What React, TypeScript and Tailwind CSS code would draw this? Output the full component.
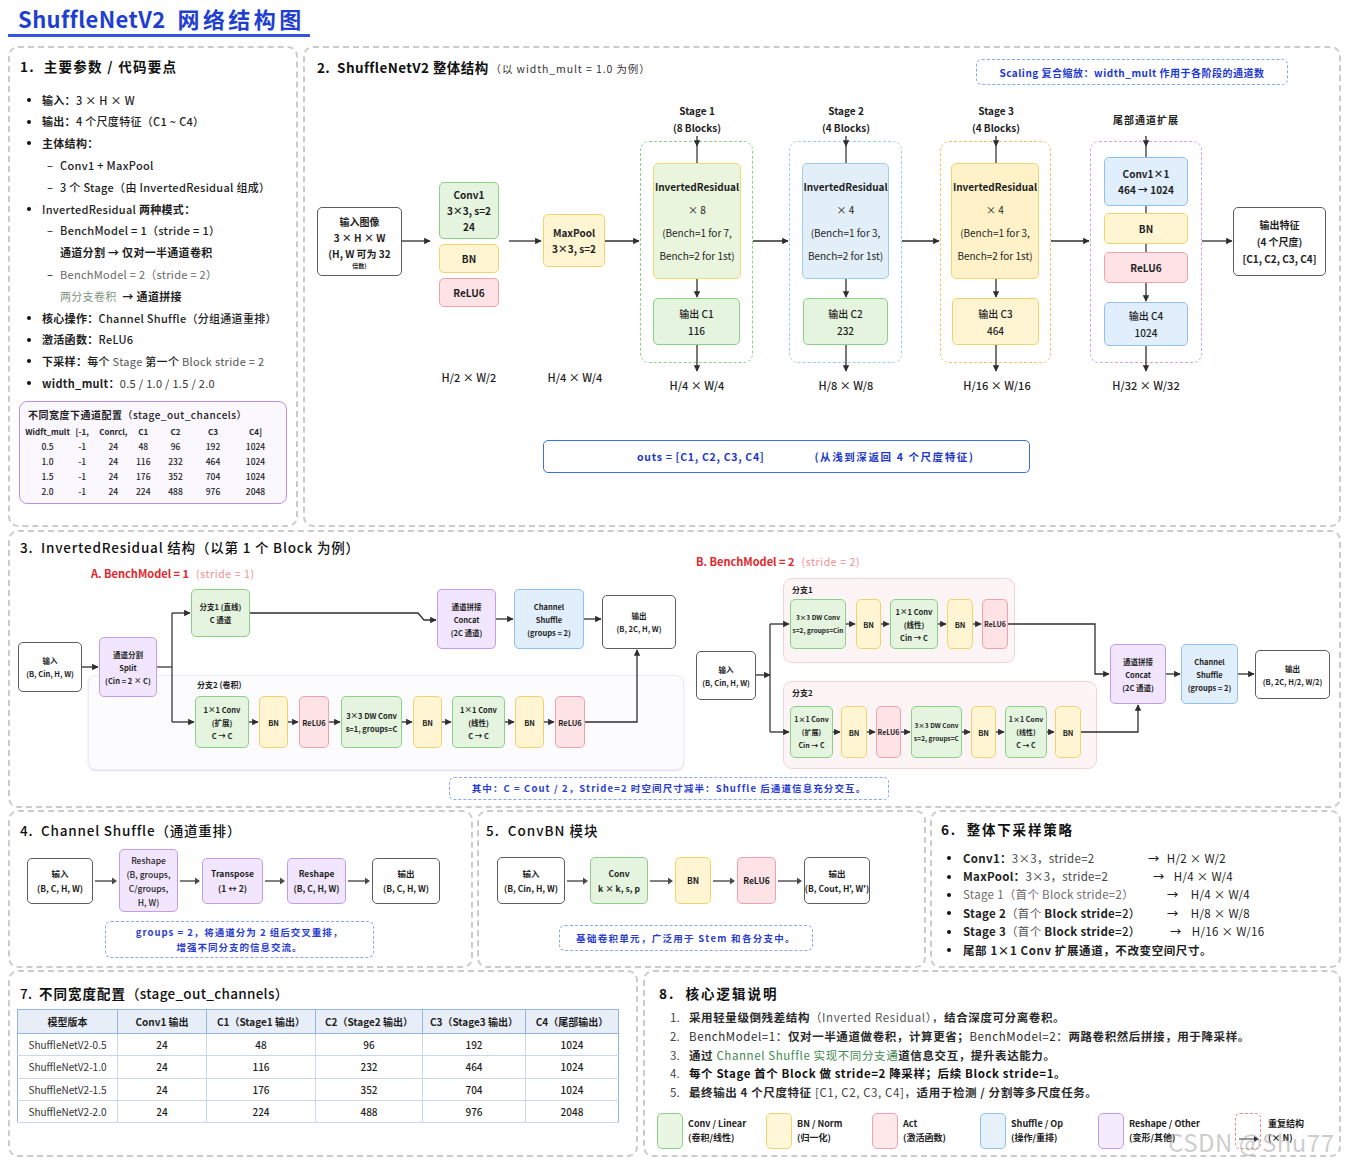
import React from "react";

type Tone = "green" | "yellow" | "pink" | "blue" | "purple" | "plain" | "ir1" | "ir2" | "ir3";

const TONE: Record<Tone, string> = {
  green: "border-[#8ccf87] bg-[#e4f4de]",
  yellow: "border-[#f1d36e] bg-[#fff5d2]",
  pink: "border-[#f0a1a9] bg-[#fde3e6]",
  blue: "border-[#92c0ef] bg-[#e1eefb]",
  purple: "border-[#c39bef] bg-[#f1e6fd]",
  plain: "border-[#5c5c5c] bg-white",
  ir1: "border-[#f1d970] bg-[#e9f5dc]",
  ir2: "border-[#9fcde8] bg-[#e2eff8]",
  ir3: "border-[#f3d470] bg-[#fff2c8]",
};

const PANEL = "relative rounded-[10px] border-2 border-dashed border-[#cbcbcb] bg-white";

type N = { x: number; y: number; w: number; h: number; t: Tone; l: React.ReactNode[]; c?: string };

function Nodes({ items, ox, oy, c }: { items: N[]; ox: number; oy: number; c: string }) {
  return (
    <>
      {items.map((n, i) => (
        <div
          key={i}
          className={`absolute flex flex-col items-center justify-center whitespace-nowrap rounded-[5px] border-[1.5px] text-center text-[#1e1e1e] ${TONE[n.t]} ${n.c ?? c}`}
          style={{ left: n.x - ox, top: n.y - oy, width: n.w, height: n.h }}
        >
          {n.l.map((s, j) => (
            <span key={j}>{s}</span>
          ))}
        </div>
      ))}
    </>
  );
}

function Wires({ id, ox, oy, w, h, paths, plain = [] }: { id: string; ox: number; oy: number; w: number; h: number; paths: string[]; plain?: string[] }) {
  return (
    <svg className="pointer-events-none absolute left-0 top-0" width={w} height={h} viewBox={`${ox} ${oy} ${w} ${h}`}>
      <defs>
        <marker id={id} viewBox="0 0 10 10" refX="9" refY="5" markerWidth="5" markerHeight="5" orient="auto-start-reverse">
          <path d="M0 0 L10 5 L0 10 z" fill="#2e2e2e" />
        </marker>
      </defs>
      {plain.map((d, i) => (
        <path key={"p" + i} d={d} fill="none" stroke="#3a3a3a" strokeWidth={1.3} />
      ))}
      {paths.map((d, i) => (
        <path key={i} d={d} fill="none" stroke="#2e2e2e" strokeWidth={1.3} markerEnd={`url(#${id})`} />
      ))}
    </svg>
  );
}

function Label({ x, y, ox, oy, children, className = "" }: { x: number; y: number; ox: number; oy: number; children: React.ReactNode; className?: string }) {
  return (
    <div className={`absolute -translate-x-1/2 -translate-y-1/2 whitespace-nowrap ${className}`} style={{ left: x - ox, top: y - oy }}>
      {children}
    </div>
  );
}

function HArrow({ w }: { w: number }) {
  return (
    <svg width={w} height={10} className="shrink-0">
      <line x1={2} y1={5} x2={w - 6} y2={5} stroke="#4a4a4a" strokeWidth={1.4} />
      <path d={`M${w - 7} 1.5 L${w - 2} 5 L${w - 7} 8.5 z`} fill="#4a4a4a" />
    </svg>
  );
}

/* ---------- section 1 ---------- */

function Bullet({ children }: { children: React.ReactNode }) {
  return (
    <div className="flex h-[21.8px] items-center whitespace-nowrap">
      <span className="w-[22px] pl-[7px]">
        <span className="block h-[4px] w-[4px] rounded-full bg-[#111]" />
      </span>
      <span>{children}</span>
    </div>
  );
}

function Dash({ children }: { children: React.ReactNode }) {
  return (
    <div className="flex h-[21.8px] items-center whitespace-nowrap">
      <span className="w-[40px] pl-[27px] text-[#333]">–</span>
      <span>{children}</span>
    </div>
  );
}

function Indent({ children }: { children: React.ReactNode }) {
  return <div className="flex h-[21.8px] items-center whitespace-nowrap pl-[40px]">{children}</div>;
}

const WIDTH_ROWS = [
  ["0.5", "-1", "24", "48", "96", "192", "1024"],
  ["1.0", "-1", "24", "116", "232", "464", "1024"],
  ["1.5", "-1", "24", "176", "352", "704", "1024"],
  ["2.0", "-1", "24", "224", "488", "976", "2048"],
];

function Params() {
  return (
    <div className={`${PANEL} w-[290px] px-[10px] pt-[8px]`}>
      <div className="h-[20px] whitespace-nowrap text-[13.5px] font-bold leading-[20px] tracking-[1.3px] text-[#111]">1.&nbsp; 主要参数 / 代码要点</div>
      <div className="mt-[13px] text-[11px] font-medium tracking-[0.3px] text-[#1e1e1e]">
        <Bullet>
          <b>输入：</b>3 × H × W
        </Bullet>
        <Bullet>
          <b>输出：</b>4 个尺度特征（C1 ~ C4）
        </Bullet>
        <Bullet>
          <b>主体结构：</b>
        </Bullet>
        <Dash>Conv1 + MaxPool</Dash>
        <Dash>3 个 Stage（由 InvertedResidual 组成）</Dash>
        <Bullet>
          InvertedResidual <b>两种模式：</b>
        </Bullet>
        <Dash>BenchModel = 1（stride = 1）</Dash>
        <Indent>
          <b>通道分割 → 仅对一半通道卷积</b>
        </Indent>
        <Dash>
          <span className="font-normal text-[#666]">BenchModel = 2（stride = 2）</span>
        </Dash>
        <Indent>
          <span className="font-normal text-[#7d927d]">两分支卷积</span>
          <b className="ml-[6px]">→ 通道拼接</b>
        </Indent>
        <Bullet>
          <b>核心操作：</b>Channel Shuffle（分组通道重排）
        </Bullet>
        <Bullet>
          <b>激活函数：</b>ReLU6
        </Bullet>
        <Bullet>
          <b>下采样：</b>每个 <span className="font-normal text-[#555]">Stage</span> 第一个 <span className="font-normal text-[#555]">Block stride = 2</span>
        </Bullet>
        <Bullet>
          <b>width_mult：</b>
          <span className="font-normal text-[#333]">0.5 / 1.0 / 1.5 / 2.0</span>
        </Bullet>
      </div>
      <div className="ml-[-1px] mt-[7px] h-[103px] w-[268px] rounded-[8px] border-[1.5px] border-[#bb8ff0] bg-[#fbf7ff] pt-[4px]">
        <div className="whitespace-nowrap pl-[8px] text-[10px] font-bold leading-[18px] tracking-[0.5px] text-[#222]">
          不同宽度下通道配置<span className="font-medium">（stage_out_chancels）</span>
        </div>
        <div className="grid grid-cols-[37px_32.5px_29.5px_30.5px_34px_41px_44px] pl-[9px] text-[8.5px] font-medium text-[#222]">
          {["Widft_mult", "[-1,", "Conrcl,", "C1", "C2", "C3", "C4]"].map((h) => (
            <div key={h} className="flex h-[15px] items-center justify-center whitespace-nowrap text-[8px] font-bold">
              {h}
            </div>
          ))}
          {WIDTH_ROWS.flat().map((v, i) => (
            <div key={i} className="flex h-[15px] items-center justify-center">
              {v}
            </div>
          ))}
        </div>
      </div>
    </div>
  );
}

/* ---------- section 2 ---------- */

const S2X = 305;
const S2Y = 48;

const S2_NODES: N[] = [
  {
    x: 317, y: 207, w: 85, h: 69, t: "plain", c: "text-[10px] font-bold leading-[16px]",
    l: ["输入图像", "3 × H × W", "(H, W 可为 32", <span className="block text-[6px] leading-[8px]">倍数)</span>],
  },
  { x: 439, y: 182, w: 60, h: 57, t: "green", l: ["Conv1", "3×3, s=2", "24"] },
  { x: 439, y: 244, w: 60, h: 29, t: "yellow", l: ["BN"] },
  { x: 439, y: 278, w: 60, h: 29, t: "pink", l: ["ReLU6"] },
  { x: 543, y: 214, w: 62, h: 53, t: "yellow", l: ["MaxPool", "3×3, s=2"] },
  { x: 653, y: 163, w: 88, h: 116, t: "ir1", c: "text-[10px] leading-[23px]", l: [<b>InvertedResidual</b>, "× 8", "(Bench=1 for 7,", "Bench=2 for 1st)"] },
  { x: 653, y: 298, w: 87, h: 47, t: "green", c: "text-[10px] font-medium leading-[17px]", l: ["输出 C1", "116"] },
  { x: 802, y: 163, w: 87, h: 116, t: "ir2", c: "text-[10px] leading-[23px]", l: [<b>InvertedResidual</b>, "× 4", "(Bench=1 for 3,", "Bench=2 for 1st)"] },
  { x: 803, y: 298, w: 85, h: 47, t: "green", c: "text-[10px] font-medium leading-[17px]", l: ["输出 C2", "232"] },
  { x: 951, y: 163, w: 88, h: 116, t: "ir3", c: "text-[10px] leading-[23px]", l: [<b>InvertedResidual</b>, "× 4", "(Bench=1 for 3,", "Bench=2 for 1st)"] },
  { x: 952, y: 298, w: 87, h: 47, t: "yellow", c: "text-[10px] font-medium leading-[17px]", l: ["输出 C3", "464"] },
  { x: 1104, y: 157, w: 84, h: 49, t: "blue", l: ["Conv1×1", "464 → 1024"] },
  { x: 1104, y: 213, w: 84, h: 31, t: "yellow", l: ["BN"] },
  { x: 1104, y: 252, w: 84, h: 31, t: "pink", l: ["ReLU6"] },
  { x: 1104, y: 302, w: 84, h: 44, t: "blue", c: "text-[10px] font-medium leading-[17px]", l: ["输出 C4", "1024"] },
  { x: 1233, y: 207, w: 93, h: 69, t: "plain", c: "text-[10px] font-bold leading-[17px]", l: ["输出特征", "(4 个尺度)", "[C1, C2, C3, C4]"] },
];

const STAGE_BOXES = [
  { x: 640, w: 113, c: "border-[#8fd08c]" },
  { x: 789, w: 113, c: "border-[#9cd3d8]" },
  { x: 940, w: 111, c: "border-[#f3c466]" },
  { x: 1090, w: 112, c: "border-[#c8a4f1]" },
];

function Overall() {
  const arrows = [
    "M402 241 H430", "M509 241 H541", "M605 241 H639", "M753 241 H788", "M902 241 H939", "M1051 241 H1089", "M1202 241 H1232",
    "M697 279 V297", "M846 279 V297", "M996 279 V297", "M1146 283 V301",
    "M697 345 V371", "M846 345 V371", "M996 345 V371", "M1146 346 V371",
    "M697 136 V146", "M846 136 V146", "M996 136 V146", "M1146 136 V146",
  ];
  const plain = ["M1146 206 V213", "M1146 244 V252", "M697 146 V163", "M846 146 V163", "M996 146 V163", "M1146 146 V157"];
  return (
    <div className={`${PANEL} flex-1 pl-[12px] pt-[9px]`}>
      <div className="flex h-[20px] items-baseline whitespace-nowrap leading-[20px] text-[#111]">
        <span className="text-[13.5px] font-bold tracking-[0.4px]">2.&nbsp; ShuffleNetV2 整体结构</span>
        <span className="ml-[2px] text-[10.5px] tracking-[0.9px] text-[#333]">（以 width_mult = 1.0 为例）</span>
      </div>
      <div
        className="absolute flex items-center justify-center whitespace-nowrap rounded-[6px] border-[1.5px] border-dashed border-[#80a8ef] text-[10px] font-bold tracking-[0.5px] text-[#1d38d4]"
        style={{ left: 976 - S2X, top: 59 - S2Y, width: 312, height: 26 }}
      >
        Scaling 复合缩放：width_mult 作用于各阶段的通道数
      </div>
      {STAGE_BOXES.map((s) => (
        <div
          key={s.x}
          className={`absolute rounded-[9px] border-[1.5px] border-dashed ${s.c}`}
          style={{ left: s.x - S2X, top: 141 - S2Y, width: s.w, height: 222 }}
        />
      ))}
      <Wires id="a2" ox={S2X} oy={S2Y} w={1034} h={477} paths={arrows} plain={plain} />
      <Nodes items={S2_NODES} ox={S2X} oy={S2Y} c="text-[10px] font-bold leading-[16px]" />
      {[
        [697, "Stage 1", "(8 Blocks)"],
        [846, "Stage 2", "(4 Blocks)"],
        [996, "Stage 3", "(4 Blocks)"],
      ].map(([x, a, b]) => (
        <Label key={a as string} x={x as number} y={119} ox={S2X} oy={S2Y} className="text-center text-[10px] font-bold leading-[17px] text-[#1e1e1e]">
          <div>{a}</div>
          <div>{b}</div>
        </Label>
      ))}
      <Label x={1146} y={119} ox={S2X} oy={S2Y} className="text-[10px] font-bold tracking-[1px] text-[#1e1e1e]">
        尾部通道扩展
      </Label>
      {[
        [469, 377, "H/2 × W/2"],
        [575, 377, "H/4 × W/4"],
        [697, 385, "H/4 × W/4"],
        [846, 385, "H/8 × W/8"],
        [997, 385, "H/16 × W/16"],
        [1146, 385, "H/32 × W/32"],
      ].map(([x, y, t], i) => (
        <Label key={i} x={x as number} y={y as number} ox={S2X} oy={S2Y} className="text-[11px] font-medium text-[#1e1e1e]">
          {t}
        </Label>
      ))}
      <div
        className="absolute flex items-center whitespace-nowrap rounded-[5px] border-[1.5px] border-[#3f6fe6] pl-[93px] text-[10.5px] font-bold text-[#2137c9]"
        style={{ left: 543 - S2X, top: 440 - S2Y, width: 487, height: 33 }}
      >
        <span className="tracking-[0.7px]">outs = [C1, C2, C3, C4]</span>
        <span className="ml-[50px] tracking-[1.6px]">(从浅到深返回 4 个尺度特征)</span>
      </div>
    </div>
  );
}

/* ---------- section 3 ---------- */

const S3X = 10;
const S3Y = 532;

const S3_NODES: N[] = [
  { x: 18, y: 642, w: 64, h: 50, t: "plain", l: ["输入", "(B, Cin, H, W)"] },
  { x: 99, y: 637, w: 58, h: 60, t: "purple", l: ["通道分割", "Split", "(Cin = 2 × C)"] },
  { x: 191, y: 589, w: 59, h: 48, t: "green", l: ["分支1 (直线)", "C 通道"] },
  { x: 195, y: 696, w: 54, h: 52, t: "green", l: ["1×1 Conv", "(扩展)", "C → C"] },
  { x: 259, y: 696, w: 29, h: 52, t: "yellow", l: ["BN"] },
  { x: 299, y: 696, w: 30, h: 52, t: "pink", l: ["ReLU6"] },
  { x: 341, y: 696, w: 61, h: 52, t: "green", l: ["3×3 DW Conv", "s=1, groups=C"] },
  { x: 413, y: 696, w: 29, h: 52, t: "yellow", l: ["BN"] },
  { x: 452, y: 696, w: 53, h: 52, t: "green", l: ["1×1 Conv", "(线性)", "C → C"] },
  { x: 515, y: 696, w: 29, h: 52, t: "yellow", l: ["BN"] },
  { x: 555, y: 696, w: 30, h: 52, t: "pink", l: ["ReLU6"] },
  { x: 437, y: 589, w: 59, h: 60, t: "purple", l: ["通道拼接", "Concat", "(2C 通道)"] },
  { x: 514, y: 589, w: 70, h: 60, t: "blue", l: ["Channel", "Shuffle", "(groups = 2)"] },
  { x: 602, y: 595, w: 74, h: 54, t: "plain", l: ["输出", "(B, 2C, H, W)"] },

  { x: 696, y: 651, w: 60, h: 49, t: "plain", l: ["输入", "(B, Cin, H, W)"] },
  { x: 790, y: 599, w: 56, h: 50, t: "green", l: ["3×3 DW Conv", "s=2, groups=Cin"], c: "text-[6.5px] font-bold leading-[13px]" },
  { x: 856, y: 599, w: 25, h: 50, t: "yellow", l: ["BN"] },
  { x: 890, y: 599, w: 48, h: 50, t: "green", l: ["1×1 Conv", "(线性)", "Cin → C"] },
  { x: 947, y: 599, w: 26, h: 50, t: "yellow", l: ["BN"] },
  { x: 982, y: 599, w: 26, h: 50, t: "pink", l: ["ReLU6"], c: "text-[7px] font-bold" },
  { x: 790, y: 706, w: 43, h: 52, t: "green", l: ["1×1 Conv", "(扩展)", "Cin → C"], c: "text-[7px] font-bold leading-[13px]" },
  { x: 841, y: 706, w: 26, h: 52, t: "yellow", l: ["BN"] },
  { x: 876, y: 706, w: 25, h: 52, t: "pink", l: ["ReLU6"], c: "text-[7px] font-bold" },
  { x: 911, y: 706, w: 51, h: 52, t: "green", l: ["3×3 DW Conv", "s=2, groups=C"], c: "text-[6.5px] font-bold leading-[13px]" },
  { x: 971, y: 706, w: 25, h: 52, t: "yellow", l: ["BN"] },
  { x: 1005, y: 706, w: 42, h: 52, t: "green", l: ["1×1 Conv", "(线性)", "C → C"], c: "text-[7px] font-bold leading-[13px]" },
  { x: 1055, y: 706, w: 26, h: 52, t: "yellow", l: ["BN"] },
  { x: 1110, y: 644, w: 56, h: 60, t: "purple", l: ["通道拼接", "Concat", "(2C 通道)"] },
  { x: 1181, y: 644, w: 57, h: 60, t: "blue", l: ["Channel", "Shuffle", "(groups = 2)"] },
  { x: 1255, y: 650, w: 75, h: 49, t: "plain", l: ["输出", "(B, 2C, H/2, W/2)"] },
];

function Inverted() {
  const arrows = [
    "M82 667 H98", "M172 613 H190", "M172 722 H194",
    "M250 613 H418 L424 620 H436",
    "M249 722 H258", "M288 722 H298", "M329 722 H340", "M402 722 H412", "M442 722 H451", "M505 722 H514", "M544 722 H554",
    "M585 722 H637 V650",
    "M496 619 H513", "M584 619 H601",
    "M756 675 H770", "M770 624 H789", "M770 732 H789",
    "M846 624 H855", "M881 624 H889", "M938 624 H946", "M973 624 H981",
    "M833 732 H840", "M867 732 H875", "M901 732 H910", "M962 732 H970", "M996 732 H1004", "M1047 732 H1054",
    "M1008 624 H1095 V674 H1109", "M1081 732 H1138 V705",
    "M1166 674 H1180", "M1238 674 H1254",
  ];
  const plain = ["M157 667 H172", "M172 613 V722", "M770 624 V732"];
  return (
    <div className={`${PANEL} mt-[3px] h-[278px] pl-[10px] pt-[5px]`}>
      <div className="h-[20px] whitespace-nowrap text-[13.5px] font-medium leading-[20px] tracking-[0.8px] text-[#111]">3.&nbsp; InvertedResidual 结构（以第 1 个 Block 为例）</div>
      <div className="absolute flex items-baseline whitespace-nowrap" style={{ left: 91 - S3X, top: 565 - S3Y }}>
        <span className="text-[11px] font-bold text-[#e3262b]">A. BenchModel = 1</span>
        <span className="ml-[7px] text-[10.5px] tracking-[0.6px] text-[#ef8f92]">(stride = 1)</span>
      </div>
      <div className="absolute flex items-baseline whitespace-nowrap" style={{ left: 696 - S3X, top: 553 - S3Y }}>
        <span className="text-[11px] font-bold text-[#e3262b]">B. BenchModel = 2</span>
        <span className="ml-[7px] text-[10.5px] tracking-[0.6px] text-[#ef8f92]">(stride = 2)</span>
      </div>
      <div
        className="absolute rounded-[8px] border border-[#ecebf1] bg-[#fcfcfe] shadow-[0_1px_2px_rgba(140,110,190,0.25)]"
        style={{ left: 88 - S3X, top: 675 - S3Y, width: 596, height: 95 }}
      />
      <div className="absolute rounded-[9px] border-[1.5px] border-[#f4d2d6] bg-[#fdf4f5]" style={{ left: 783 - S3X, top: 578 - S3Y, width: 232, height: 85 }} />
      <div className="absolute rounded-[9px] border-[1.5px] border-[#f4d2d6] bg-[#fdf4f5]" style={{ left: 783 - S3X, top: 681 - S3Y, width: 314, height: 88 }} />
      <div className="absolute text-[8px] font-bold text-[#222]" style={{ left: 197 - S3X, top: 679 - S3Y }}>
        分支2 (卷积)
      </div>
      <div className="absolute text-[8px] font-bold text-[#222]" style={{ left: 792 - S3X, top: 584 - S3Y }}>
        分支1
      </div>
      <div className="absolute text-[8px] font-bold text-[#222]" style={{ left: 792 - S3X, top: 687 - S3Y }}>
        分支2
      </div>
      <Wires id="a3" ox={S3X} oy={S3Y} w={1329} h={274} paths={arrows} plain={plain} />
      <Nodes items={S3_NODES} ox={S3X} oy={S3Y} c="text-[7.5px] font-bold leading-[13px]" />
      <div
        className="absolute flex items-center justify-center whitespace-nowrap rounded-[5px] border-[1.5px] border-dashed border-[#84a9ee] text-[9.5px] font-bold tracking-[1.1px] text-[#2a3cd0]"
        style={{ left: 449 - S3X, top: 777 - S3Y, width: 440, height: 23 }}
      >
        其中：C = Cout / 2，Stride=2 时空间尺寸减半：Shuffle 后通道信息充分交互。
      </div>
    </div>
  );
}

/* ---------- sections 4 / 5 ---------- */

function FlowBox({ t, w, h, children }: { t: Tone; w: number; h: number; children: React.ReactNode }) {
  return (
    <div
      className={`flex shrink-0 flex-col items-center justify-center whitespace-nowrap rounded-[5px] border-[1.5px] text-center text-[8.5px] font-bold leading-[15px] text-[#1e1e1e] ${TONE[t]}`}
      style={{ width: w, height: h }}
    >
      {children}
    </div>
  );
}

function Shuffle() {
  return (
    <div className={`${PANEL} w-[465px] pl-[10px] pt-[8px]`}>
      <div className="h-[20px] whitespace-nowrap text-[13.5px] font-medium leading-[20px] tracking-[0.8px] text-[#111]">4.&nbsp; Channel Shuffle（通道重排）</div>
      <div className="ml-[7px] mt-[9px] flex h-[63px] items-center">
        <FlowBox t="plain" w={66} h={46}>
          <span>输入</span>
          <span>(B, C, H, W)</span>
        </FlowBox>
        <HArrow w={26} />
        <FlowBox t="purple" w={59} h={63}>
          <span className="font-medium leading-[14px]">Reshape</span>
          <span className="font-medium leading-[14px]">(B, groups,</span>
          <span className="font-medium leading-[14px]">C/groups,</span>
          <span className="font-medium leading-[14px]">H, W)</span>
        </FlowBox>
        <HArrow w={24} />
        <FlowBox t="purple" w={61} h={46}>
          <span>Transpose</span>
          <span>(1 ↔ 2)</span>
        </FlowBox>
        <HArrow w={24} />
        <FlowBox t="purple" w={59} h={46}>
          <span>Reshape</span>
          <span>(B, C, H, W)</span>
        </FlowBox>
        <HArrow w={26} />
        <FlowBox t="plain" w={68} h={46}>
          <span>输出</span>
          <span>(B, C, H, W)</span>
        </FlowBox>
      </div>
      <div className="ml-[85px] mt-[9px] flex h-[37px] w-[269px] flex-col items-center justify-center whitespace-nowrap rounded-[6px] border-[1.5px] border-dashed border-[#84a9ee] text-[9.5px] font-bold leading-[15px] tracking-[1px] text-[#2a3cd0]">
        <span>groups = 2，将通道分为 2 组后交叉重排，</span>
        <span>增强不同分支的信息交流。</span>
      </div>
    </div>
  );
}

function ConvBN() {
  return (
    <div className={`${PANEL} w-[449px] pl-[7px] pt-[8px]`}>
      <div className="h-[20px] whitespace-nowrap text-[13.5px] font-medium leading-[20px] tracking-[1px] text-[#111]">5.&nbsp; ConvBN 模块</div>
      <div className="ml-[11px] mt-[17px] flex h-[47px] items-center">
        <FlowBox t="plain" w={68} h={47}>
          <span>输入</span>
          <span>(B, Cin, H, W)</span>
        </FlowBox>
        <HArrow w={25} />
        <FlowBox t="green" w={58} h={47}>
          <span>Conv</span>
          <span>k × k, s, p</span>
        </FlowBox>
        <HArrow w={27} />
        <FlowBox t="yellow" w={36} h={47}>
          BN
        </FlowBox>
        <HArrow w={26} />
        <FlowBox t="pink" w={39} h={47}>
          ReLU6
        </FlowBox>
        <HArrow w={28} />
        <FlowBox t="plain" w={66} h={47}>
          <span>输出</span>
          <span>(B, Cout, H', W')</span>
        </FlowBox>
      </div>
      <div className="ml-[73px] mt-[21px] flex h-[26px] w-[254px] items-center justify-center whitespace-nowrap rounded-[6px] border-[1.5px] border-dashed border-[#84a9ee] text-[9.5px] font-bold tracking-[1.3px] text-[#2a3cd0]">
        基础卷积单元，广泛用于 Stem 和各分支中。
      </div>
    </div>
  );
}

/* ---------- section 6 ---------- */

const DOWN = [
  { w: "w-[185px]", g: "ml-[7px]", a: <><b>Conv1：</b><span className="font-normal text-[#444]">3×3，stride=2</span></>, r: "H/2 × W/2" },
  { w: "w-[190px]", g: "ml-[9px]", a: <><b>MaxPool：</b><span className="font-normal text-[#444]">3×3，stride=2</span></>, r: "H/4 × W/4" },
  { w: "w-[204px]", g: "ml-[12px]", a: <span className="font-normal text-[#6b6b6b]">Stage 1（首个 Block stride=2）</span>, r: "H/4 × W/4" },
  { w: "w-[204px]", g: "ml-[12px]", a: <><b>Stage 2</b><span className="font-normal text-[#555]">（首个</span> <b>Block stride</b>=2）</>, r: "H/8 × W/8" },
  { w: "w-[207px]", g: "ml-[10px]", a: <><b>Stage 3</b><span className="font-normal text-[#555]">（首个</span> <b>Block stride</b>=2）</>, r: "H/16 × W/16" },
];

function Downsample() {
  return (
    <div className={`${PANEL} flex-1 pl-[9px] pt-[7px]`}>
      <div className="h-[20px] whitespace-nowrap text-[13.5px] font-bold leading-[20px] tracking-[1.8px] text-[#111]">6.&nbsp; 整体下采样策略</div>
      <div className="mt-[10px] text-[11.5px] font-medium tracking-[0.3px] text-[#1e1e1e]">
        {DOWN.map((d, i) => (
          <div key={i} className="flex h-[18.4px] items-center whitespace-nowrap">
            <span className="w-[22px] pl-[6px]">
              <span className="block h-[4px] w-[4px] rounded-full bg-[#111]" />
            </span>
            <span className={d.w}>{d.a}</span>
            <span>→</span>
            <span className={`${d.g} font-normal text-[#222]`}>{d.r}</span>
          </div>
        ))}
        <div className="flex h-[18.4px] items-center whitespace-nowrap">
          <span className="w-[22px] pl-[6px]">
            <span className="block h-[4px] w-[4px] rounded-full bg-[#111]" />
          </span>
          <b className="tracking-[0.6px]">尾部 1×1 Conv 扩展通道，不改变空间尺寸。</b>
        </div>
      </div>
    </div>
  );
}

/* ---------- section 7 ---------- */

const VARIANTS = [
  ["ShuffleNetV2-0.5", "24", "48", "96", "192", "1024"],
  ["ShuffleNetV2-1.0", "24", "116", "232", "464", "1024"],
  ["ShuffleNetV2-1.5", "24", "176", "352", "704", "1024"],
  ["ShuffleNetV2-2.0", "24", "224", "488", "976", "2048"],
];

function Widths() {
  const cols = ["w-[100px]", "w-[89px]", "w-[109px]", "w-[107px]", "w-[103px]", "w-[93px]"];
  return (
    <div className={`${PANEL} w-[630px] pt-[11px]`}>
      <div className="h-[20px] whitespace-nowrap pl-[10px] text-[13.5px] font-medium leading-[20px] tracking-[0.3px] text-[#111]">
        7.&nbsp; <b className="tracking-[1px]">不同宽度配置</b>（stage_out_channels）
      </div>
      <table className="ml-[7px] mt-[6px] w-[601px] table-fixed border-collapse text-[10px] text-[#1e1e1e]">
        <thead>
          <tr className="h-[24px] bg-[#e8eef8]">
            {["模型版本", "Conv1 输出", "C1（Stage1 输出）", "C2（Stage2 输出）", "C3（Stage3 输出）", "C4（尾部输出）"].map((h, i) => (
              <th key={h} className={`${cols[i]} whitespace-nowrap border-[1.5px] border-[#94b4e2] text-center font-bold`}>
                {h}
              </th>
            ))}
          </tr>
        </thead>
        <tbody>
          {VARIANTS.map((r) => (
            <tr key={r[0]} className="h-[22.3px]">
              {r.map((v, i) => (
                <td key={i} className={`border border-[#c9d8ef] text-center ${i === 0 ? "border-l-[1.5px] border-l-[#94b4e2] text-[#333]" : "font-medium"} ${i === 5 ? "border-r-[1.5px] border-r-[#94b4e2]" : ""}`}>
                  {v}
                </td>
              ))}
            </tr>
          ))}
        </tbody>
      </table>
    </div>
  );
}

/* ---------- section 8 ---------- */

const LEGEND = [
  { w: "w-[109px]", b: "border-[#8ccf87] bg-[#e9f6e4]", a: "Conv / Linear", c: "(卷积/线性)" },
  { w: "w-[106px]", b: "border-[#f1d36e] bg-[#fff7d8]", a: "BN / Norm", c: "(归一化)" },
  { w: "w-[108px]", b: "border-[#f0a1a9] bg-[#fde8ea]", a: "Act", c: "(激活函数)" },
  { w: "w-[118px]", b: "border-[#92c0ef] bg-[#e6f1fc]", a: "Shuffle / Op", c: "(操作/重排)" },
  { w: "w-[137px]", b: "border-[#c39bef] bg-[#f4ecfd]", a: "Reshape / Other", c: "(变形/其他)" },
];

function Logic() {
  return (
    <div className={`${PANEL} flex-1 pt-[11px]`}>
      <div className="h-[20px] whitespace-nowrap pl-[14px] text-[13.5px] font-bold leading-[20px] tracking-[2px] text-[#111]">8.&nbsp; 核心逻辑说明</div>
      <ol className="mt-[5.6px] pl-[25px] text-[11.5px] tracking-[0.6px] text-[#2a2a2a]">
        {[
          <>
            <b>采用轻量级倒残差结构</b>
            <span className="text-[#555]">（Inverted Residual）</span>，<b>结合深度可分离卷积。</b>
          </>,
          <>
            BenchModel=1：<b>仅对一半通道做卷积，计算更省；</b>BenchModel=2：<b>两路卷积然后拼接，用于降采样。</b>
          </>,
          <>
            <b>通过</b> <span className="text-[#3f8a52]">Channel Shuffle 实现不同分支通</span>
            <b>道信息交互，提升表达能力。</b>
          </>,
          <b className="text-[#111]">每个 Stage 首个 Block 做 stride=2 降采样；后续 Block stride=1。</b>,
          <>
            <b>最终输出 4 个尺度特征</b> <span className="text-[#444]">[C1, C2, C3, C4]</span>，<b>适用于检测 / 分割等多尺度任务。</b>
          </>,
        ].map((t, i) => (
          <li key={i} className="flex h-[18.7px] items-center whitespace-nowrap">
            <span className="w-[19px] tracking-normal text-[#444]">{i + 1}.</span>
            <span>{t}</span>
          </li>
        ))}
      </ol>
      <div className="ml-[12px] mt-[10.6px] flex h-[36px] items-center">
        {LEGEND.map((l) => (
          <div key={l.a} className={`${l.w} flex shrink-0 items-center`}>
            <div className={`h-[36px] w-[26px] shrink-0 rounded-[5px] border-[1.5px] ${l.b}`} />
            <div className="ml-[5px] whitespace-nowrap text-[9px] font-bold leading-[14px] text-[#222]">
              <div>{l.a}</div>
              <div>{l.c}</div>
            </div>
          </div>
        ))}
        <div className="flex shrink-0 items-center">
          <div className="relative h-[36px] w-[26px] rounded-[5px] border-[1.5px] border-dashed border-[#f08a8a]">
            <svg className="absolute left-[2px] top-[21px]" width={22} height={8}>
              <line x1={1} y1={4} x2={17} y2={4} stroke="#333" strokeWidth={1} />
              <path d="M16 1 L21 4 L16 7 z" fill="#333" />
            </svg>
          </div>
          <div className="ml-[7px] whitespace-nowrap text-[9px] font-bold leading-[14px] text-[#222]">
            <div>重复结构</div>
            <div>(× N)</div>
          </div>
        </div>
      </div>
    </div>
  );
}

export default function App() {
  return (
    <div className="relative h-[1163px] w-[1353px] overflow-hidden bg-white pl-[8px] pr-[12px] font-['Noto_Sans_CJK_SC','Noto_Sans',sans-serif]">
      <div className="h-[46px] pt-[4px]">
        <div className="w-[302px] whitespace-nowrap border-b-[3px] border-[#3554e0] pb-[1px] pl-[10px] text-[22px] font-bold leading-[29px] text-[#1f3fd0]">
          <span className="tracking-[0.4px]">ShuffleNetV2</span>
          <span className="ml-[12px] tracking-[3.4px]">网络结构图</span>
        </div>
      </div>
      <div className="flex h-[481px] gap-[5px]">
        <Params />
        <Overall />
      </div>
      <Inverted />
      <div className="mt-[2px] flex h-[158px] gap-[4px]">
        <Shuffle />
        <ConvBN />
        <Downsample />
      </div>
      <div className="mt-[2px] flex h-[187px] gap-[5px]">
        <Widths />
        <Logic />
      </div>
      <div className="pointer-events-none absolute left-[1168px] top-[1124px] text-[24px] font-normal tracking-[0.5px] text-[#9a9a9a]/50">
        CSDN @Shu77
      </div>
    </div>
  );
}
